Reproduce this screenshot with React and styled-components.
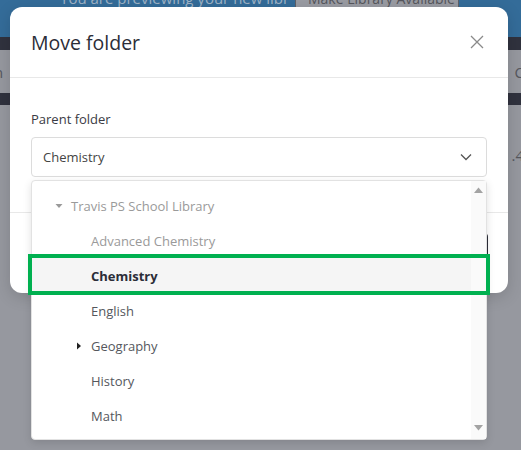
import React from 'react';
import styled, { createGlobalStyle } from 'styled-components';

const GlobalStyle = createGlobalStyle`
  html, body { margin: 0; padding: 0; }
  body {
    width: 521px;
    height: 450px;
    overflow: hidden;
    background: #96989f;
    font-family: "Open Sans", "Noto Sans", sans-serif;
  }
`;

const Page = styled.div`
  position: relative;
  width: 521px;
  height: 450px;
  overflow: hidden;
  display: flex;
  flex-direction: column;
`;

const Banner = styled.div`
  height: 37px;
  background: #346c99;
  display: flex;
  align-items: flex-start;
  padding-left: 60px;
  gap: 8px;
  overflow: hidden;
`;

const BannerText = styled.span`
  width: 227px;
  margin-top: -12px;
  font-size: 15px;
  color: #9fb3c6;
  white-space: nowrap;
  overflow: hidden;
`;

const BannerButton = styled.span`
  margin-top: -12px;
  width: 164px;
  height: 20px;
  background: #9a9ca3;
  border: 1px solid #5f6066;
  color: #55565c;
  font-size: 14px;
  line-height: 20px;
  padding: 0 12px;
  box-sizing: border-box;
  white-space: nowrap;
  overflow: hidden;
`;

const DarkBand = styled.div`
  height: ${({ h }) => h}px;
  background: #30323e;
`;

const GrayBand = styled.div`
  height: ${({ h }) => h}px;
  background: #96989f;
  display: flex;
  align-items: ${({ align }) => align || 'center'};
  justify-content: space-between;
  color: #55575d;
  font-size: 15px;
`;

const EdgeText = styled.span`
  margin: ${({ edge }) => (edge === 'left' ? '0 0 0 -6px' : '0 -3px 0 0')};
  padding-top: ${({ top }) => top || 0}px;
`;

const Modal = styled.div`
  position: absolute;
  left: 10px;
  top: 7px;
  width: 498px;
  height: 286px;
  background: #fff;
  border-radius: 12px;
  box-shadow: 0 4px 16px rgba(0, 0, 0, 0.15);
  display: flex;
  flex-direction: column;
`;

const Header = styled.div`
  height: 70px;
  padding: 0 21px 0 21px;
  display: flex;
  align-items: center;
  justify-content: space-between;
  border-bottom: 1px solid #e8e8e8;
`;

const Title = styled.h2`
  margin: 0;
  font-size: 19.5px;
  font-weight: 400;
  color: #2b2d38;
`;

const CloseButton = styled.button`
  border: 0;
  background: none;
  padding: 0;
  margin-right: 3px;
  width: 14px;
  height: 14px;
  display: flex;
`;

const Body = styled.div`
  padding: 31px 21px 35px;
`;

const Label = styled.div`
  font-size: 13px;
  font-weight: 500;
  line-height: 20px;
  color: #3a3b44;
  margin-bottom: 8px;
`;

const SelectWrap = styled.div`
  position: relative;
`;

const Select = styled.div`
  height: 40px;
  box-sizing: border-box;
  border: 1px solid #dcdcdc;
  border-radius: 4px;
  display: flex;
  align-items: center;
  justify-content: space-between;
  padding: 0 14px 0 11px;
  font-size: 13px;
  color: #444;
`;

const Footer = styled.div`
  flex: 1;
  border-top: 1px solid #e8e8e8;
  display: flex;
  align-items: center;
  justify-content: flex-end;
  padding: 0 20px;
`;

const PrimaryButton = styled.button`
  height: 40px;
  width: 110px;
  border: 0;
  border-radius: 4px;
  background: #2b2d38;
  color: #fff;
`;

const Dropdown = styled.div`
  position: absolute;
  left: 0;
  right: 0;
  top: calc(100% + 3px);
  height: 260px;
  box-sizing: border-box;
  background: #fff;
  border: 1px solid #e2e2e2;
  border-radius: 4px;
  box-shadow: 0 3px 8px rgba(0, 0, 0, 0.12);
  display: flex;
  overflow: visible;
`;

const List = styled.div`
  flex: 1;
  padding-top: 7px;
  overflow: hidden;
`;

const Row = styled.div`
  height: 35px;
  display: flex;
  align-items: center;
  padding-left: ${({ level }) => 20 + level * 20}px;
  font-size: 13px;
  color: ${({ disabled, selected }) => (disabled ? '#9a9a9a' : selected ? '#2b2d38' : '#55575d')};
  font-weight: ${({ selected }) => (selected ? 700 : 400)};
  background: ${({ selected }) => (selected ? '#f5f5f5' : 'transparent')};
`;

const Switcher = styled.span`
  width: 14px;
  margin-right: 5px;
  display: flex;
  align-items: center;
  justify-content: center;
`;

const Scrollbar = styled.div`
  width: 15px;
  background: #fafafa;
  display: flex;
  flex-direction: column;
  justify-content: space-between;
  align-items: center;
  padding: 6px 0 8px;
`;

const Highlight = styled.div`
  position: absolute;
  left: -4px;
  top: 73px;
  width: 462px;
  height: 41px;
  box-sizing: border-box;
  border: 4px solid #00b050;
  pointer-events: none;
`;

const Caret = ({ dir, color }) => (
  <svg width="8" height="8" viewBox="0 0 8 8">
    {dir === 'down' ? (
      <polygon points="0.5,2 7.5,2 4,6" fill={color} />
    ) : (
      <polygon points="2,0.5 6,4 2,7.5" fill={color} />
    )}
  </svg>
);

const ScrollArrow = ({ dir }) => (
  <svg width="9" height="6" viewBox="0 0 9 6">
    {dir === 'up' ? (
      <polygon points="0,6 9,6 4.5,0.5" fill="#a3a3a3" />
    ) : (
      <polygon points="0,0 9,0 4.5,5.5" fill="#a3a3a3" />
    )}
  </svg>
);

const folders = [
  { name: 'Travis PS School Library', level: 0, caret: 'down', disabled: true },
  { name: 'Advanced Chemistry', level: 1, disabled: true },
  { name: 'Chemistry', level: 1, selected: true },
  { name: 'English', level: 1 },
  { name: 'Geography', level: 1, caret: 'right' },
  { name: 'History', level: 1 },
  { name: 'Math', level: 1 },
];

export default function App() {
  return (
    <>
      <GlobalStyle />
      <Page>
        <Banner>
          <BannerText>You are previewing your new library</BannerText>
          <BannerButton>Make Library Available</BannerButton>
        </Banner>
        <DarkBand h={13} />
        <GrayBand h={43}>
          <EdgeText edge="left">n</EdgeText>
          <EdgeText edge="right">C</EdgeText>
        </GrayBand>
        <DarkBand h={12} />
        <GrayBand h={345} align="flex-start">
          <span />
          <EdgeText edge="right" top={40}>.4</EdgeText>
        </GrayBand>

        <Modal>
          <Header>
            <Title>Move folder</Title>
            <CloseButton aria-label="Close">
              <svg width="14" height="14" viewBox="0 0 14 14">
                <path d="M1 1 L13 13 M13 1 L1 13" stroke="#8a8a8a" strokeWidth="1.3" fill="none" />
              </svg>
            </CloseButton>
          </Header>
          <Body>
            <Label>Parent folder</Label>
            <SelectWrap>
              <Select>
                <span>Chemistry</span>
                <svg width="12" height="8" viewBox="0 0 12 8">
                  <path d="M1 1.5 L6 6.5 L11 1.5" stroke="#555" strokeWidth="1.3" fill="none" />
                </svg>
              </Select>
              <Dropdown>
                <List>
                  {folders.map((f) => (
                    <Row key={f.name} level={f.level} disabled={f.disabled} selected={f.selected}>
                      <Switcher>
                        {f.caret && <Caret dir={f.caret} color={f.caret === 'down' ? '#9a9a9a' : '#222'} />}
                      </Switcher>
                      {f.name}
                    </Row>
                  ))}
                </List>
                <Scrollbar>
                  <ScrollArrow dir="up" />
                  <ScrollArrow dir="down" />
                </Scrollbar>
                <Highlight />
              </Dropdown>
            </SelectWrap>
          </Body>
          <Footer>
            <PrimaryButton>Move</PrimaryButton>
          </Footer>
        </Modal>
      </Page>
    </>
  );
}
